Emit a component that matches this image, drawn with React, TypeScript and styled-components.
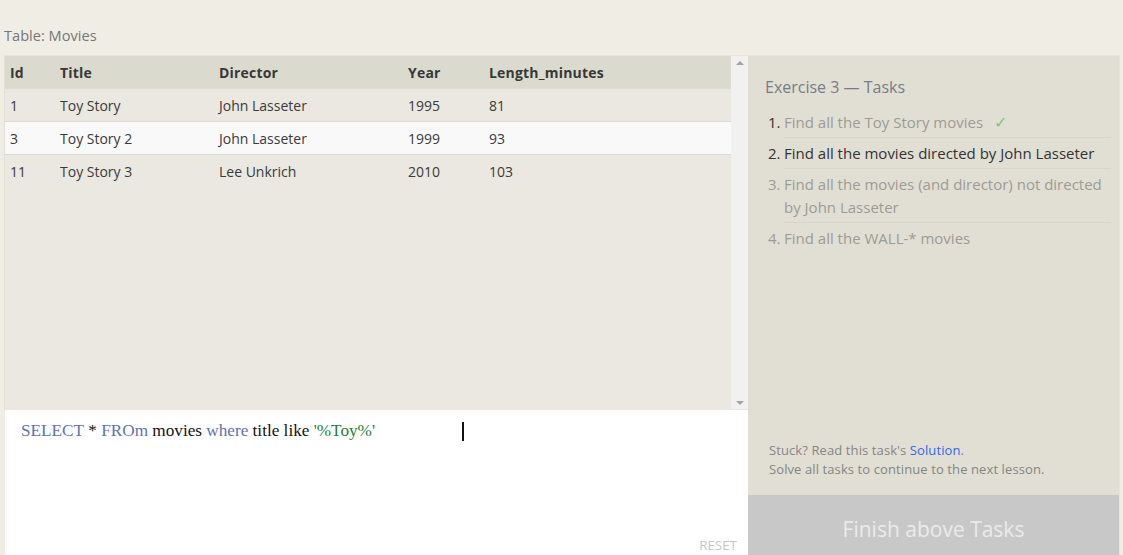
import React from "react";
import styled, { createGlobalStyle } from "styled-components";

const Global = createGlobalStyle`
  html, body { margin: 0; padding: 0; background: #f0ede5; }
  body { font-family: "Open Sans", "Noto Sans", sans-serif; width: 1123px; height: 555px; overflow: hidden; }
`;

const Page = styled.div`
  display: flex;
  flex-direction: column;
  height: 555px;
`;

const TopBar = styled.div`
  height: 55px;
  display: flex;
  align-items: flex-end;
  padding-left: 4px;
  box-sizing: border-box;
  padding-bottom: 10px;
`;

const TableLabel = styled.div`
  font-size: 14.6px;
  color: #777;
  line-height: 20px;
`;

const Main = styled.div`
  display: flex;
  flex: 1;
  padding-left: 4px;
  padding-right: 3px;
`;

const LeftCol = styled.div`
  width: 744px;
  display: flex;
  flex-direction: column;
`;

const TablePanel = styled.div`
  height: 355px;
  display: flex;
  background: #eae8e0;
  border-left: 1px solid #e2e0d6;
  border-top: 1px solid #e6e4db;
  box-sizing: border-box;
`;

const TableScroll = styled.div`
  flex: 1;
`;

const Table = styled.table`
  width: 100%;
  border-collapse: collapse;
  font-size: 14px;
  color: #333;
`;

const Th = styled.th<{ $pl?: number }>`
  text-align: left;
  font-weight: 700;
  background: #dbdacf;
  height: 32px;
  padding: 0 0 0 ${(p) => p.$pl ?? 0}px;
  color: #383838;
  letter-spacing: 0.2px;
`;

const Tr = styled.tr<{ $alt?: boolean }>`
  background: ${(p) => (p.$alt ? "#f9f9f9" : "transparent")};
  border-top: 1px solid #dcdbd6;
`;

const Td = styled.td<{ $pl?: number }>`
  height: 32px;
  padding: 0 0 0 ${(p) => p.$pl ?? 0}px;
  color: #3a3a3a;
`;

const Scrollbar = styled.div`
  width: 17px;
  background: #f1f1f1;
  display: flex;
  flex-direction: column;
  justify-content: space-between;
  align-items: center;
  padding: 5px 0 4px;
  box-sizing: border-box;
  height: 353px;
`;

const Arrow = styled.div<{ $down?: boolean }>`
  width: 0;
  height: 0;
  border-left: 4px solid transparent;
  border-right: 4px solid transparent;
  ${(p) =>
    p.$down
      ? "border-top: 4px solid #a3a3a3;"
      : "border-bottom: 4px solid #a3a3a3;"}
`;

const Editor = styled.div`
  flex: 1;
  background: #fff;
  position: relative;
  padding: 10px 16px;
  box-sizing: border-box;
  margin-left: 1px;
`;

const CodeLine = styled.div`
  font-family: "Liberation Serif", "DejaVu Serif", serif;
  font-size: 17.2px;
  line-height: 22px;
  color: #111;
  display: flex;
  align-items: center;
`;

const Kw = styled.span`
  color: #6072b8;
`;

const Str = styled.span`
  color: #1f7f3a;
`;

const Caret = styled.span`
  display: inline-block;
  width: 2px;
  height: 19px;
  background: #111;
  margin-left: 87px;
`;

const Reset = styled.div`
  position: absolute;
  right: 11px;
  bottom: 1px;
  font-size: 13.4px;
  color: #c7c7c7;
`;

const RightCol = styled.div`
  width: 372px;
  display: flex;
  flex-direction: column;
  background: #e1dfd4;
  border: 1px solid #e7e5dc;
  border-bottom: none;
  border-left: none;
  box-sizing: border-box;
`;

const Tasks = styled.div`
  flex: 1;
  padding: 20px 8px 0 17px;
  display: flex;
  flex-direction: column;
`;

const TasksTitle = styled.div`
  font-size: 16px;
  color: #777c88;
  line-height: 22px;
  margin-bottom: 9px;
`;

const TaskList = styled.ol`
  margin: 0;
  padding: 0 0 0 3px;
  list-style: none;
`;

const TaskItem = styled.li<{ $state: "done" | "current" | "todo" }>`
  display: flex;
  font-size: 15px;
  line-height: 23px;
  padding: 4px 0 3px;
  color: ${(p) => (p.$state === "current" ? "#333" : "#9d9b94")};
`;

const Num = styled.span<{ $dark?: boolean }>`
  width: 16px;
  flex-shrink: 0;
  color: ${(p) => (p.$dark ? "#333" : "inherit")};
`;

const TaskText = styled.span`
  flex: 1;
`;

const Sep = styled.div`
  height: 1px;
  background: #d8d6cc;
  margin-left: 16px;
`;

const Check = styled.span`
  color: #7bc67b;
  margin-left: 11px;
  font-size: 16px;
`;

const Help = styled.div`
  padding: 0 0 16px 21px;
  font-size: 13px;
  line-height: 19px;
  color: #858585;
  letter-spacing: 0.1px;
`;

const Link = styled.span`
  color: #3366ee;
`;

const FinishButton = styled.div`
  height: 60px;
  background: #c8c8c8;
  color: #ebebeb;
  font-size: 21px;
  display: flex;
  align-items: center;
  justify-content: center;
  padding-top: 8px;
  box-sizing: border-box;
`;

const rows = [
  { id: "1", title: "Toy Story", dir: "John Lasseter", year: "1995", len: "81" },
  { id: "3", title: "Toy Story 2", dir: "John Lasseter", year: "1999", len: "93" },
  { id: "11", title: "Toy Story 3", dir: "Lee Unkrich", year: "2010", len: "103" },
];

export default function App() {
  return (
    <>
      <Global />
      <Page>
        <TopBar>
          <TableLabel>Table: Movies</TableLabel>
        </TopBar>
        <Main>
          <LeftCol>
            <TablePanel>
              <TableScroll>
                <Table>
                  <colgroup>
                    <col style={{ width: 55 }} />
                    <col style={{ width: 159 }} />
                    <col style={{ width: 189 }} />
                    <col style={{ width: 81 }} />
                    <col />
                  </colgroup>
                  <thead>
                    <tr>
                      <Th $pl={5}>Id</Th>
                      <Th>Title</Th>
                      <Th>Director</Th>
                      <Th>Year</Th>
                      <Th>Length_minutes</Th>
                    </tr>
                  </thead>
                  <tbody>
                    {rows.map((r, i) => (
                      <Tr key={r.id} $alt={i === 1}>
                        <Td $pl={5}>{r.id}</Td>
                        <Td>{r.title}</Td>
                        <Td>{r.dir}</Td>
                        <Td>{r.year}</Td>
                        <Td>{r.len}</Td>
                      </Tr>
                    ))}
                  </tbody>
                </Table>
              </TableScroll>
              <Scrollbar>
                <Arrow />
                <Arrow $down />
              </Scrollbar>
            </TablePanel>
            <Editor>
              <CodeLine>
                <Kw>SELECT</Kw>&nbsp;*&nbsp;<Kw>FROm</Kw>&nbsp;movies&nbsp;<Kw>where</Kw>&nbsp;title like&nbsp;
                <Str>'%Toy%'</Str>
                <Caret />
              </CodeLine>
              <Reset>RESET</Reset>
            </Editor>
          </LeftCol>
          <RightCol>
            <Tasks>
              <TasksTitle>Exercise 3 — Tasks</TasksTitle>
              <TaskList>
                <TaskItem $state="done">
                  <Num $dark>1.</Num>
                  <TaskText>
                    Find all the Toy Story movies<Check>✓</Check>
                  </TaskText>
                </TaskItem>
                <Sep />
                <TaskItem $state="current">
                  <Num>2.</Num>
                  <TaskText>Find all the movies directed by John Lasseter</TaskText>
                </TaskItem>
                <Sep />
                <TaskItem $state="todo">
                  <Num>3.</Num>
                  <TaskText>Find all the movies (and director) not directed by John Lasseter</TaskText>
                </TaskItem>
                <Sep />
                <TaskItem $state="todo">
                  <Num>4.</Num>
                  <TaskText>Find all the WALL-* movies</TaskText>
                </TaskItem>
              </TaskList>
            </Tasks>
            <Help>
              Stuck? Read this task's <Link>Solution</Link>.
              <br />
              Solve all tasks to continue to the next lesson.
            </Help>
            <FinishButton>Finish above Tasks</FinishButton>
          </RightCol>
        </Main>
      </Page>
    </>
  );
}
